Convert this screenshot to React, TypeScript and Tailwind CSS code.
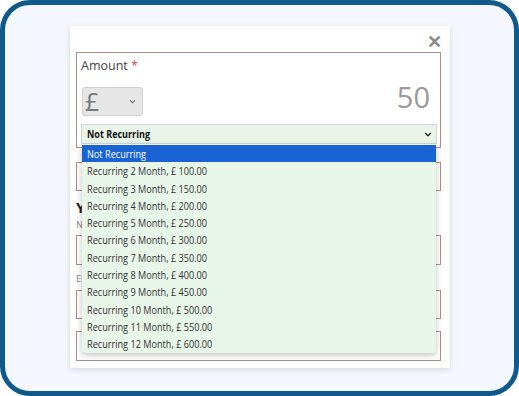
const options = [
  "Not Recurring",
  "Recurring 2 Month, £ 100.00",
  "Recurring 3 Month, £ 150.00",
  "Recurring 4 Month, £ 200.00",
  "Recurring 5 Month, £ 250.00",
  "Recurring 6 Month, £ 300.00",
  "Recurring 7 Month, £ 350.00",
  "Recurring 8 Month, £ 400.00",
  "Recurring 9 Month, £ 450.00",
  "Recurring 10 Month, £ 500.00",
  "Recurring 11 Month, £ 550.00",
  "Recurring 12 Month, £ 600.00",
];

function Chevron({ className }: { className?: string }) {
  return (
    <svg viewBox="0 0 10 6" className={className} fill="none" stroke="currentColor" strokeWidth={1.6}>
      <path d="M1.5 1.2 5 4.6 8.5 1.2" />
    </svg>
  );
}

export default function App() {
  return (
    <div className="w-[519px] h-[396px] bg-white" style={{ fontFamily: '"Open Sans", "Liberation Sans", sans-serif' }}>
      <div className="h-full border-[5px] border-[#0f5a8a] rounded-[30px] bg-[#f4f7fd] pl-[65px] pt-[21px]">
        <div className="relative w-[380px] h-[342px] bg-white shadow-[0_2px_6px_rgba(0,0,0,0.12)] pl-[6px] pt-[26px]">
          <span className="absolute right-[8px] top-[6px] text-[18px] font-bold leading-none text-[#8a8a8a]">✕</span>

          <div className="w-[365px] h-[96px] border border-[#b58a84] pl-[4px] pr-[3px] pt-[4px]">
            <div className="text-[12.5px] text-[#444] leading-[18px]">
              Amount <span className="text-[#b5554f]">*</span>
            </div>
            <div className="flex items-start justify-between mt-[12px] pr-[7px]">
              <div className="w-[61px] h-[29px] ml-[1px] bg-[#e6e6e6] border border-[#cfcfcf] rounded-[3px] flex items-center justify-between pl-[2px] pr-[6px]">
                <span className="text-[25px] leading-none text-[#6d7c82]">£</span>
                <Chevron className="w-[7px] h-[5px] text-[#777]" />
              </div>
              <span className="text-[29px] leading-[20px] text-[#9a9a9a]">50</span>
            </div>
            <div className="mt-[8px] w-[356px] h-[20px] bg-[#e8f4e8] border border-[#d2d6d2] flex items-center justify-between pl-[5px] pr-[4px]">
              <span className="inline-block origin-left scale-x-[0.82] text-[11px] font-bold text-[#111] whitespace-nowrap">Not Recurring</span>
              <Chevron className="w-[8px] h-[5px] text-[#222]" />
            </div>
          </div>

          <div className="mt-[14px] w-[365px] h-[29px] border border-[#b58a84]" />
          <div className="mt-[6px] text-[15px] font-bold leading-[20px] text-[#222]">Your details</div>
          <div className="mt-[2px] text-[9px] text-[#888] leading-[12px]">NAME</div>
          <div className="mt-[4px] w-[365px] h-[30px] border border-[#b58a84]" />
          <div className="mt-[8px] text-[9px] text-[#888] leading-[12px]">EMAIL</div>
          <div className="mt-[5px] w-[365px] h-[29px] border border-[#b58a84]" />
          <div className="mt-[12px] w-[365px] h-[30px] border border-[#b58a84] text-[9px] text-[#bbb] pl-[6px] pt-[13px] leading-[10px]">MOBILE PHONE</div>

          <div className="absolute left-[12px] top-[119px] w-[354px] bg-[#e8f5e9] rounded-b-[4px] shadow-[0_2px_6px_rgba(0,0,0,0.25)] overflow-hidden">
            {options.map((o, i) => (
              <div
                key={o}
                className={
                  i === 0
                    ? "h-[17.3px] leading-[17.3px] pl-[5px] text-[11px] bg-[#1a63d3] text-white"
                    : "h-[17.3px] leading-[17.3px] pl-[5px] text-[11px] text-[#333]"
                }
              >
                <span className="inline-block origin-left scale-x-[0.83] whitespace-nowrap">{o}</span>
              </div>
            ))}
          </div>
        </div>
      </div>
    </div>
  );
}
